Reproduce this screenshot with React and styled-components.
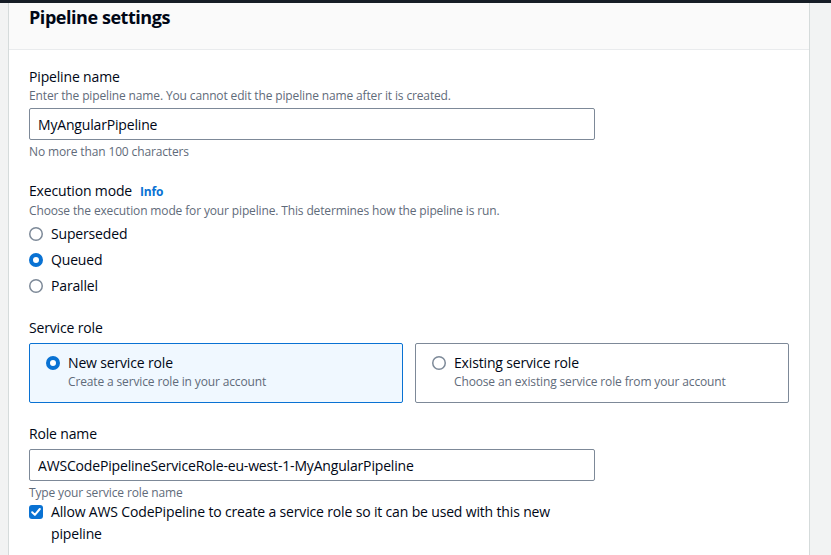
import React, { useState } from 'react';
import styled, { createGlobalStyle } from 'styled-components';

const GlobalStyle = createGlobalStyle`
  html, body {
    margin: 0;
    padding: 0;
    background: #f2f3f3;
    font-family: 'Open Sans', 'Noto Sans', sans-serif;
    letter-spacing: -0.16px;
    color: #000716;
  }
`;

const Page = styled.div`
  min-height: 555px;
  border-top: 3px solid #161d26;
  padding-left: 8px;
  overflow: hidden;
`;

const Card = styled.section`
  width: 802px;
  box-sizing: border-box;
  background: #fff;
  border-left: 1px solid #d5dbdb;
  border-right: 1px solid #d5dbdb;
  min-height: 552px;
`;

const Header = styled.header`
  background: #fafafa;
  border-bottom: 1px solid #e9ebed;
  padding: 0 20px 18px;
`;

const Title = styled.h2`
  margin: 0;
  font-size: 18px;
  line-height: 28px;
  font-weight: 700;
  letter-spacing: -0.45px;
`;

const Body = styled.div`
  padding: 16px 20px 20px;
  display: flex;
  flex-direction: column;
  gap: 20px;
`;

const Field = styled.div`
  display: flex;
  flex-direction: column;
`;

const Label = styled.div`
  font-size: 14px;
  line-height: 22px;
  display: flex;
  align-items: baseline;
  gap: 8px;
`;

const InfoLink = styled.a`
  font-size: 12px;
  font-weight: 700;
  color: #0972d3;
  text-decoration: none;
`;

const Hint = styled.div`
  font-size: 12px;
  line-height: 16px;
  letter-spacing: -0.14px;
  color: #5f6b7a;
  margin-top: ${(p) => (p.$after ? '4px' : '0')};
`;

const Input = styled.input`
  margin-top: 4px;
  width: 566px;
  height: 32px;
  box-sizing: border-box;
  border: 1px solid #7d8998;
  border-radius: 2px;
  padding: 4px 8px;
  font-family: inherit;
  font-size: 14px;
  letter-spacing: -0.17px;
  color: #000716;
  outline: none;
`;

const RadioList = styled.div`
  margin-top: 4px;
  display: flex;
  flex-direction: column;
  gap: 4px;
`;

const RadioRow = styled.label`
  display: flex;
  align-items: center;
  gap: 8px;
  font-size: 14px;
  line-height: 22px;
`;

const Tiles = styled.div`
  margin-top: 4px;
  display: grid;
  grid-template-columns: 374px 374px;
  gap: 12px;
`;

const Tile = styled.div`
  box-sizing: border-box;
  height: 60px;
  padding: 8px 16px 12px;
  border: 1px solid ${(p) => (p.$selected ? '#0972d3' : '#7d8998')};
  background: ${(p) => (p.$selected ? '#f0f8ff' : '#fff')};
  border-radius: 2px;
  display: flex;
  gap: 8px;
`;

const TileDot = styled.div`
  height: 22px;
  display: flex;
  align-items: center;
`;

const TileText = styled.div`
  display: flex;
  flex-direction: column;
`;

const TileTitle = styled.div`
  font-size: 14px;
  line-height: 22px;
`;

const CheckRow = styled.label`
  width: 566px;
  display: flex;
  gap: 8px;
  font-size: 14px;
  line-height: 22px;
`;

const CheckBox = styled.div`
  flex: none;
  height: 22px;
  display: flex;
  align-items: center;
`;

const Radio = ({ checked }) => (
  <svg width="14" height="14" viewBox="0 0 14 14" style={{ flex: 'none' }}>
    {checked ? (
      <circle cx="7" cy="7" r="5" fill="#fff" stroke="#0972d3" strokeWidth="4" />
    ) : (
      <circle cx="7" cy="7" r="6.25" fill="#fff" stroke="#7d8998" strokeWidth="1.5" />
    )}
  </svg>
);

const Check = () => (
  <svg width="14" height="14" viewBox="0 0 14 14">
    <rect x="0" y="0" width="14" height="14" rx="3" fill="#0972d3" />
    <path d="M3.2 7.2 L5.9 9.9 L10.8 4" fill="none" stroke="#fff" strokeWidth="2" strokeLinecap="round" strokeLinejoin="round" />
  </svg>
);

const modes = ['Superseded', 'Queued', 'Parallel'];

const roles = [
  { title: 'New service role', desc: 'Create a service role in your account' },
  { title: 'Existing service role', desc: 'Choose an existing service role from your account' },
];

export default function App() {
  const [mode] = useState('Queued');
  const [role] = useState(0);
  return (
    <>
      <GlobalStyle />
      <Page>
        <Card>
          <Header>
            <Title>Pipeline settings</Title>
          </Header>
          <Body>
            <Field>
              <Label>Pipeline name</Label>
              <Hint>Enter the pipeline name. You cannot edit the pipeline name after it is created.</Hint>
              <Input defaultValue="MyAngularPipeline" />
              <Hint $after>No more than 100 characters</Hint>
            </Field>

            <Field>
              <Label>
                Execution mode <InfoLink href="#">Info</InfoLink>
              </Label>
              <Hint>Choose the execution mode for your pipeline. This determines how the pipeline is run.</Hint>
              <RadioList>
                {modes.map((m) => (
                  <RadioRow key={m}>
                    <Radio checked={m === mode} />
                    {m}
                  </RadioRow>
                ))}
              </RadioList>
            </Field>

            <Field>
              <Label>Service role</Label>
              <Tiles>
                {roles.map((r, i) => (
                  <Tile key={r.title} $selected={i === role}>
                    <TileDot>
                      <Radio checked={i === role} />
                    </TileDot>
                    <TileText>
                      <TileTitle>{r.title}</TileTitle>
                      <Hint>{r.desc}</Hint>
                    </TileText>
                  </Tile>
                ))}
              </Tiles>
            </Field>

            <Field>
              <Label>Role name</Label>
              <Input defaultValue="AWSCodePipelineServiceRole-eu-west-1-MyAngularPipeline" />
              <Hint $after>Type your service role name</Hint>
              <CheckRow>
                <CheckBox>
                  <Check />
                </CheckBox>
                Allow AWS CodePipeline to create a service role so it can be used with this new pipeline
              </CheckRow>
            </Field>
          </Body>
        </Card>
      </Page>
    </>
  );
}
